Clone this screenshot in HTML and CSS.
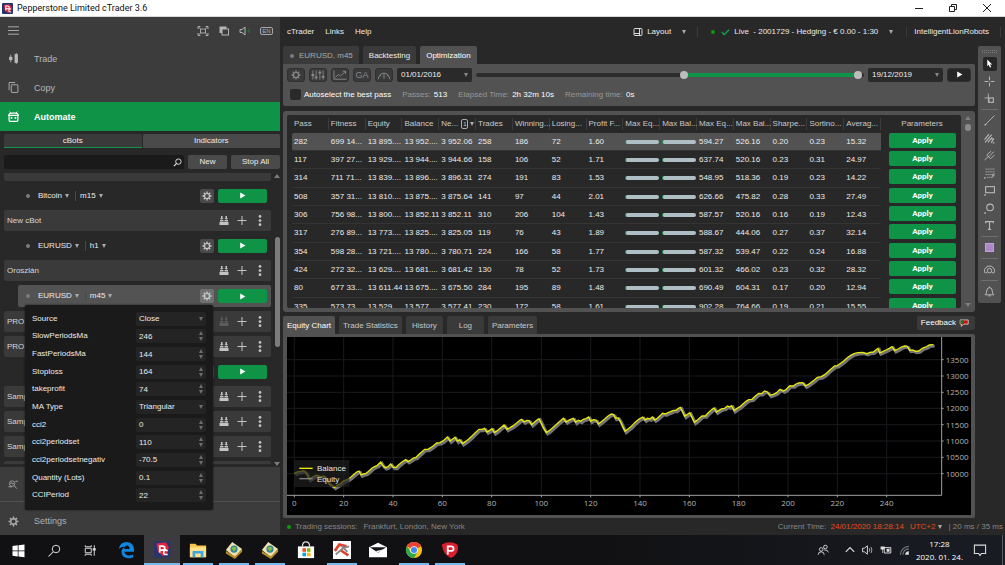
FILE: index.html
```html
<!DOCTYPE html>
<html lang="en">
<head>
    <meta charset="UTF-8">
    <meta name="viewport" content="width=device-width, initial-scale=1.0">
    <title>Pepperstone Limited cTrader 3.6</title>
    <link rel="stylesheet" href="styles.css">
</head>
<body>
    <!-- icon sprite -->
    <svg class="sprite" xmlns="http://www.w3.org/2000/svg">
        <symbol id="i-gear" viewBox="0 0 20 20">
            <circle cx="10" cy="10" r="5" fill="none" stroke="currentColor" stroke-width="2.4"/>
            <path d="M10 1v3M10 16v3M1 10h3M16 10h3M3.6 3.6l2.2 2.2M14.2 14.2l2.2 2.2M3.6 16.4l2.2-2.2M14.2 5.8l2.2-2.2" stroke="currentColor" stroke-width="2.6"/>
        </symbol>
        <symbol id="i-play" viewBox="0 0 12 12"><path d="M2 1l9 5-9 5z" fill="currentColor"/></symbol>
        <symbol id="i-build" viewBox="0 0 20 20">
            <path d="M1 13h18v6H1zM2 9h7v3H2zM11 9h7v3h-7zM4 1h3v4h2l-3.500 3.500L2 5h2zM13 1h3v4h2l-3.500 3.500L11 5h2z" fill="currentColor"/>
        </symbol>
        <symbol id="i-plus" viewBox="0 0 20 20"><path d="M10 1v18M1 10h18" stroke="currentColor" stroke-width="2"/></symbol>
        <symbol id="i-dots" viewBox="0 0 20 24">
            <circle cx="10" cy="3" r="3" fill="currentColor"/><circle cx="10" cy="12" r="3" fill="currentColor"/><circle cx="10" cy="21" r="3" fill="currentColor"/>
        </symbol>
        <symbol id="i-loupe" viewBox="0 0 20 20">
            <circle cx="12" cy="8" r="6" fill="none" stroke="currentColor" stroke-width="2"/>
            <path d="M8 12l-6 6" stroke="currentColor" stroke-width="2.4"/>
        </symbol>
    </svg>

    <div class="app">
        <header class="titlebar">
            <svg class="title-logo" viewBox="0 0 32 32"><rect width="32" height="32" rx="3" fill="#22356f"/><path d="M6 5l17-1 5 8-3 13-8 4-9-9z" fill="#e5243b"/><path d="M11 22V9h6q4 0 4 4t-4 4h-5M27 18q-6-3-7 3t7 5" fill="none" stroke="#fff" stroke-width="3"/></svg>
            <span class="title-text">Pepperstone Limited cTrader 3.6</span>
            <div class="window-buttons">
                <button aria-label="Minimize"><svg viewBox="0 0 10 10"><path d="M1 5.500h8" stroke="#222"/></svg></button>
                <button aria-label="Restore"><svg viewBox="0 0 10 10"><path d="M1.500 3.500h5v5h-5zM3.500 3.500v-2h5v5h-2" fill="none" stroke="#222"/></svg></button>
                <button aria-label="Close"><svg viewBox="0 0 10 10"><path d="M1 1l8 8M9 1l-8 8" stroke="#222"/></svg></button>
            </div>
        </header>

        <div class="body">
            <aside class="sidebar">
                <div class="side-top">
                    <button aria-label="Menu"><svg class="icon-menu" viewBox="0 0 12 12"><path d="M0 2h12M0 6h12M0 10h12" stroke="currentColor"/></svg></button>
                    <div class="side-tools">
                        <button aria-label="Full screen"><svg viewBox="0 0 24 20"><path d="M2 6V1h5M17 1h5v5M2 14v5h5M17 19h5v-5M3 2l4 4M21 2l-4 4M3 18l4-4M21 18l-4-4M7 6h10v8H7z" fill="none" stroke="currentColor" stroke-width="1.800"/></svg></button>
                        <button aria-label="Detach"><svg viewBox="0 0 24 20"><path d="M3 1h14v5H8v8H3z" fill="currentColor"/><rect x="8" y="6" width="13" height="12" fill="none" stroke="currentColor" stroke-width="2"/></svg></button>
                        <button aria-label="Sound"><svg viewBox="0 0 24 20"><path d="M2 7h4l6-5v16l-6-5H2z" fill="none" stroke="currentColor" stroke-width="2"/><path d="M15 10l7-5v10z" fill="#1d6b34"/></svg></button>
                        <button class="lang" aria-label="Language">EN</button>
                    </div>
                </div>
                <nav class="side-nav">
                    <a href="#trade"><svg viewBox="0 0 20 20"><path d="M5 3v14" stroke="currentColor" stroke-width="1.500"/><rect x="2" y="7" width="6" height="6" fill="currentColor"/><path d="M15 0v20" stroke="currentColor" stroke-width="1.500"/><rect x="12" y="2" width="6" height="16" fill="currentColor"/></svg>Trade</a>
                    <a href="#copy"><svg viewBox="0 0 20 20"><path d="M2 15V1h11" fill="none" stroke="currentColor" stroke-width="1.600"/><rect x="6" y="5" width="12" height="14" rx="1" fill="none" stroke="currentColor" stroke-width="1.600"/></svg>Copy</a>
                    <a href="#automate" class="active"><svg viewBox="0 0 20 20"><path d="M3 1l3 4M17 1l-3 4" stroke="currentColor" stroke-width="1.600"/><path d="M1 8q1-4 5-4h8q4 0 5 4zM2 9v8q0 2 2 2h12q2 0 2-2V9" fill="none" stroke="currentColor" stroke-width="2.200"/><path d="M5 11h3v3H5zM12 11h3v3h-3z" fill="currentColor"/></svg>Automate</a>
                </nav>

                <section class="bots">
                    <div class="bot-tabs">
                        <button class="active">cBots</button>
                        <button>Indicators</button>
                    </div>
                    <div class="bot-search">
                        <label class="search-box"><input type="text" aria-label="Search cBots"><svg><use href="#i-loupe"/></svg></label>
                        <button class="btn-new">New</button>
                        <button class="btn-stop">Stop All</button>
                    </div>
                    <div class="bot-scroll">
                        <div class="bot-list" id="bot-list"></div>
                        <div class="side-scrollbar"><span class="tri up"></span><span class="thumb"></span><span class="tri down"></span></div>
                    </div>
                </section>

                <div class="side-foot">
                    <button class="foot-find" aria-label="Find"><svg viewBox="0 0 24 20"><circle cx="9" cy="8" r="6" fill="none" stroke="currentColor" stroke-width="1.600"/><path d="M13 12l6 7M5 8l3-2 2 3 3-2M1 15h8M16 3h6" fill="none" stroke="currentColor" stroke-width="1.800"/></svg></button>
                    <a class="foot-settings" href="#settings"><svg><use href="#i-gear"/></svg>Settings</a>
                </div>
            </aside>

            <main class="workspace">
                <div class="menubar">
                    <nav class="menu">
                        <a href="#ctrader">cTrader</a>
                        <a href="#links">Links</a>
                        <a href="#help">Help</a>
                    </nav>
                    <div class="account">
                        <button class="layout-btn"><svg viewBox="0 0 20 20"><rect x="2" y="3" width="16" height="14" rx="2" fill="none" stroke="currentColor" stroke-width="1.800"/><path d="M2 13h11M13 3v14" stroke="currentColor" stroke-width="1.800"/></svg>Layout<span class="caret"></span></button>
                        <button class="account-btn"><span class="dot-live"></span><svg viewBox="0 0 20 20"><path d="M2 10l5 6L18 5" fill="none" stroke="#12a04e" stroke-width="3"/></svg>Live&nbsp; - 2001729 - Hedging - € 0.00 - 1:30<span class="caret"></span></button>
                        <button class="user-btn">IntelligentLionRobots</button>
                    </div>
                </div>

                <div class="work-row">
                    <div class="work-main">
                        <div class="tabs">
                            <button class="dim"><span class="dot"></span>EURUSD, m45</button>
                            <button>Backtesting</button>
                            <button class="active">Optimization</button>
                        </div>

                        <div class="opt-panel">
                            <div class="opt-tools">
                                <button class="tool" aria-label="Settings"><svg><use href="#i-gear"/></svg></button>
                                <button class="tool" aria-label="Parameters"><svg viewBox="0 0 30 20"><path d="M4 0v20M11 0v20M19 0v20M26 0v20" stroke="currentColor" stroke-width="1.800"/><path d="M1 8h6v4H1zM8 13h6v4H8zM16 3h6v4h-6zM23 12h6v4h-6z" fill="currentColor"/></svg></button>
                                <button class="tool" aria-label="Criteria"><svg viewBox="0 0 30 20"><path d="M2 0v19h27M5 15l7-6 4 3L27 2M21 2h6v6" fill="none" stroke="currentColor" stroke-width="2"/></svg></button>
                                <button class="tool ga">GA</button>
                                <button class="tool" aria-label="Resources"><svg viewBox="0 0 30 20"><path d="M3 19a12 13 0 0124 0M15 18V8M6 10l3 3M24 10l-3 3M15 6v3" fill="none" stroke="currentColor" stroke-width="2"/></svg></button>
                                <span class="date"><select aria-label="From"><option>01/01/2016</option></select></span>
                                <div class="range">
                                    <div class="range-fill" style="left: 54%; right: 2%"></div>
                                    <input type="range" min="0" max="1000" value="537" aria-label="Start date">
                                    <input type="range" min="0" max="1000" value="994" aria-label="End date">
                                </div>
                                <span class="date"><select aria-label="To"><option>19/12/2019</option></select></span>
                                <button class="start" aria-label="Start"><svg><use href="#i-play"/></svg></button>
                            </div>
                            <div class="opt-info">
                                <label class="auto"><input type="checkbox">Autoselect the best pass</label>
                                <span>Passes: <b>513</b></span>
                                <span>Elapsed Time: <b>2h 32m 10s</b></span>
                                <span>Remaining time: <b>0s</b></span>
                            </div>
                        </div>

                        <div class="pass-panel">
                            <div class="pass-view">
                                <table class="passes">
                                    <thead>
                                        <tr>
                                            <th>Pass</th><th>Fitness</th><th>Equity</th><th>Balance</th>
                                            <th>Ne... <span class="sort">1</span><span class="caret"></span></th>
                                            <th>Trades</th><th>Winning...</th><th>Losing...</th><th>Profit F...</th>
                                            <th>Max Eq...</th><th>Max Bal...</th><th>Max Eq...</th><th>Max Bal...</th>
                                            <th>Sharpe...</th><th>Sortino...</th><th>Averag...</th>
                                            <th class="col-apply">Parameters</th>
                                        </tr>
                                    </thead>
                                    <tbody id="pass-rows"></tbody>
                                </table>
                            </div>
                            <div class="pass-scrollbar"><span class="tri up"></span><span class="knob"></span><span class="tri down"></span></div>
                        </div>

                        <div class="tabs result-tabs">
                            <button class="active">Equity Chart</button>
                            <button>Trade Statistics</button>
                            <button class="wide">History</button>
                            <button class="wide">Log</button>
                            <button>Parameters</button>
                            <button class="feedback">Feedback<svg viewBox="0 0 26 20"><path d="M3 2h21v11H12l-6 6 1-6H3z" fill="#c41414" stroke="#ddd" stroke-width="2"/><path d="M4 3h9v9H4z" fill="#17762e"/></svg></button>
                        </div>
                        <div class="chart-panel">
                            <svg id="chart" viewBox="0 0 2052 534" role="img" aria-label="Equity chart"></svg>
                        </div>
                    </div>

                    <div class="draw-bar">
                        <span class="grip"></span>
                        <button class="on" aria-label="Pointer"><svg viewBox="0 0 20 20"><path d="M5 1l11 11h-5l3 6-3 1-3-6-3 3z" fill="#fff"/></svg></button>
                        <button aria-label="Crosshair"><svg viewBox="0 0 20 20"><path d="M10 1v7M10 12v7M1 10h7M12 10h7" stroke="currentColor" stroke-width="1.800"/></svg></button>
                        <button aria-label="Market snap"><svg viewBox="0 0 20 20"><path d="M8 1v17M1 9h8" stroke="currentColor" stroke-width="1.600"/><rect x="9" y="9" width="8" height="8" fill="none" stroke="currentColor" stroke-width="2"/></svg></button>
                        <hr>
                        <button aria-label="Line"><svg viewBox="0 0 20 20"><path d="M2 18L19 1" stroke="currentColor" stroke-width="1.600"/><circle cx="2.500" cy="17.500" r="1.800" fill="currentColor"/></svg></button>
                        <button aria-label="Fibonacci"><svg viewBox="0 0 20 20"><path d="M1 12L9 2M2 17L14 3M7 17l8-9M13 11h4M13 18l5-8M16 18h3" stroke="currentColor" stroke-width="2"/></svg></button>
                        <button aria-label="Pitchfork"><svg viewBox="0 0 20 20"><path d="M1 18l8-7M5 9l7 7M5 9l8-7M9 12l9-9M12 16l7-7" fill="none" stroke="currentColor" stroke-width="1.700"/></svg></button>
                        <button aria-label="Fibonacci grid"><svg viewBox="0 0 20 20"><path d="M3 2h17M3 7h17M3 12h12M6 17h9" stroke="currentColor" stroke-width="1.800" stroke-dasharray="2 1.500"/><path d="M16 17v-6h4M16 14h3" stroke="currentColor" stroke-width="1.600" fill="none"/><circle cx="1.500" cy="18" r="1.500" fill="currentColor"/></svg></button>
                        <button aria-label="Rectangle"><svg viewBox="0 0 20 20"><rect x="3" y="3" width="16" height="11" fill="none" stroke="currentColor" stroke-width="2"/><circle cx="2" cy="18" r="1.600" fill="currentColor"/></svg></button>
                        <button aria-label="Ellipse"><svg viewBox="0 0 20 20"><circle cx="11" cy="8" r="6" fill="none" stroke="currentColor" stroke-width="2"/><circle cx="2" cy="18" r="1.600" fill="currentColor"/></svg></button>
                        <button aria-label="Text"><svg viewBox="0 0 20 20"><path d="M3 6V3h14v3M10 3v14M7 17h6" fill="none" stroke="currentColor" stroke-width="2"/></svg></button>
                        <hr>
                        <button aria-label="Colour"><span class="swatch"></span></button>
                        <hr>
                        <button aria-label="Snapshot"><svg viewBox="0 0 20 20"><path d="M6 16H2q-1 0-1-2v-4q0-2 3-3l2-3h8l2 3q3 1 3 3v4q0 2-1 2h-4" fill="none" stroke="currentColor" stroke-width="1.800"/><circle cx="10" cy="12" r="4" fill="none" stroke="currentColor" stroke-width="1.800"/></svg></button>
                        <hr>
                        <button aria-label="Alerts"><svg viewBox="0 0 20 20"><path d="M2 16q3-2 3-7 0-6 5-6t5 6q0 5 3 7zM8 18h4M10 1v2" fill="none" stroke="currentColor" stroke-width="1.800"/></svg></button>
                    </div>
                </div>

                <footer class="status">
                    <span class="dot-live"></span>
                    <span>Trading sessions:</span>
                    <span class="sessions">Frankfurt, London, New York</span>
                    <span class="clock">Current Time: <em>24/01/2020 18:28:14</em></span>
                    <button class="utc">UTC+2<span class="caret"></span></button>
                    <span>| 20 ms / 35 ms</span>
                </footer>
            </main>
        </div>

        <div class="taskbar">
            <button aria-label="Start"><svg viewBox="0 0 20 20"><path d="M2 4l7-1v7H2zM10 3l8-1v8h-8zM2 11h7v7l-7-1zM10 11h8v8l-8-1z" fill="#fff"/></svg></button>
            <button aria-label="Search"><svg viewBox="0 0 20 20"><circle cx="12" cy="8" r="5" fill="none" stroke="#ddd" stroke-width="1.300"/><path d="M8 12l-6 6" stroke="#ddd" stroke-width="1.400"/></svg></button>
            <button aria-label="Task view"><svg viewBox="0 0 20 20"><path d="M3 7h8v6H3zM3 3v2h8V3M3 17v-2h8v2M15 3v14" fill="none" stroke="#ddd" stroke-width="1.300"/><path d="M13 7h4v3h-4z" fill="#ddd"/></svg></button>
            <button aria-label="Edge"><svg viewBox="0 0 20 20"><path d="M2 9q1-8 9-8 8 1 8 9v2H8q1 4 5 4 3 0 5-1v3q-3 1.500-7 1-6-1-6-7 0-4 5-6-6 0-8 3zM8 9h6q0-4-3-4t-3 4z" fill="#0f86e0" fill-rule="evenodd"/></svg></button>
            <button class="current" aria-label="cTrader"><svg viewBox="0 0 32 32"><rect x="2" y="2" width="29" height="29" rx="3" fill="#27356f"/><path d="M6 6l17-2 5 9-3 12-7 4-9-8z" fill="#e5243b"/><path d="M12 22V11h5q4 0 4 3.500T17 18h-4M26 19q-6-3-7 2.500t7 4" fill="none" stroke="#fff" stroke-width="3"/></svg></button>
            <button class="open" aria-label="Explorer"><svg viewBox="0 0 20 20"><path d="M1 3h6l2 2h10v13H1z" fill="#f5c84c"/><path d="M1 7h18v11H1z" fill="#fde08a"/><path d="M4 18v-7h12v7h-3v-4H7v4z" fill="#3ca7e6"/></svg></button>
            <button class="open" aria-label="MetaTrader 4"><svg viewBox="0 0 20 20"><path d="M1 10L8 1l11 8-8 9z" fill="#efe2b0"/><path d="M1 11v3l10 6 8-8V9l-8 8z" fill="#b58c2c"/><circle cx="10" cy="9" r="4" fill="#2d7f9b"/><path d="M7 8q3-3 6 0l-3 4z" fill="#7dbb42"/></svg></button>
            <button class="open" aria-label="MetaTrader 4"><svg viewBox="0 0 20 20"><path d="M1 10L8 1l11 8-8 9z" fill="#efe2b0"/><path d="M1 11v3l10 6 8-8V9l-8 8z" fill="#b58c2c"/><circle cx="10" cy="9" r="4" fill="#2d7f9b"/><path d="M7 8q3-3 6 0l-3 4z" fill="#7dbb42"/></svg></button>
            <button aria-label="Store"><svg viewBox="0 0 20 20"><path d="M1 6h18v13H1z" fill="#fff"/><path d="M6 6q0-5 4-5t4 5" fill="none" stroke="#ddd" stroke-width="1.400"/><path d="M6 8h4v4H6z" fill="#f25022"/><path d="M11 8h4v4h-4z" fill="#7fba00"/><path d="M6 13h4v4H6z" fill="#00a4ef"/><path d="M11 13h4v4h-4z" fill="#ffb900"/></svg></button>
            <button class="open" aria-label="Trading terminal"><svg viewBox="0 0 20 20"><path d="M0 0h20v20H0z" fill="#fff"/><path d="M2 11l5-7 8 2M8 10l9 6" fill="none" stroke="#e2402c" stroke-width="3"/><path d="M3 15l8-7 7-2M9 5l7 7" fill="none" stroke="#888" stroke-width="2"/></svg></button>
            <button aria-label="Mail"><svg viewBox="0 0 20 20"><path d="M0 7l10-5 10 5v11H0z" fill="#fff"/><path d="M1 7h18l-9 6z" fill="#151518"/><path d="M8 11l10-2-9 4z" fill="#fff"/></svg></button>
            <button class="open" aria-label="Chrome"><svg viewBox="0 0 20 20"><circle cx="10" cy="10" r="9" fill="#fbc116"/><path d="M2.200 5.500A9 9 0 0010 19l4-7H6z" fill="#2fa650"/><path d="M10 10L2.200 5.500A9 9 0 0117.800 5.500z" fill="#e94335"/><path d="M2.200 5.500h15.600L10 10z" fill="#e94335"/><circle cx="10" cy="10" r="4.200" fill="#fff"/><circle cx="10" cy="10" r="3.400" fill="#4688f1"/></svg></button>
            <button class="open" aria-label="Pepperstone"><svg viewBox="0 0 20 20"><path d="M1 4q9-5 17 0 2 3 0 8-2 5-7 7-7-3-9-10z" fill="#dc1f2e"/><path d="M7.500 15V6h3.500q3 0 3 2.500T11 11H8" fill="none" stroke="#fff" stroke-width="2"/></svg></button>

            <div class="tray">
                <svg class="people" viewBox="0 0 20 20"><circle cx="14" cy="5" r="3" fill="none" stroke="#ddd" stroke-width="1.500"/><circle cx="7" cy="9" r="3" fill="none" stroke="#ddd" stroke-width="1.500"/><path d="M2 18q0-5 5-5t5 5M12 10q6-1 7 4" fill="none" stroke="#ddd" stroke-width="1.500"/></svg>
                <svg viewBox="0 0 20 20"><path d="M3 13l7-7 7 7" fill="none" stroke="#ddd" stroke-width="2"/></svg>
                <svg viewBox="0 0 20 20"><path d="M1 7h3l5-4v14l-5-4H1z" fill="none" stroke="#ddd" stroke-width="1.600"/><path d="M12 7q2 3 0 6M15 5q3 5 0 10" fill="none" stroke="#bbb" stroke-width="1.400"/></svg>
                <svg viewBox="0 0 20 20"><path d="M7 6h11v9H7z" fill="none" stroke="#ddd" stroke-width="1.600"/><path d="M11 8h5v5h-5zM1 4h7v5H1zM4 9h1v6H4z" fill="#ddd"/></svg>
                <svg viewBox="0 0 20 20"><path d="M4 18A14 14 0 0118 4M8 18A10 10 0 0118 8" fill="none" stroke="#777" stroke-width="2"/><path d="M12 18a6 6 0 016-6v6z" fill="#ddd"/></svg>
                <div class="tray-time"><span>17:28</span><span>2020. 01. 24.</span></div>
                <svg class="notes" viewBox="0 0 20 20"><path d="M2 3h16v12h-6l-2 3-2-3H2z" fill="none" stroke="#ddd" stroke-width="1.500"/></svg>
            </div>
        </div>
    </div>

    <script src="script.js"></script>
</body>
</html>
```
FILE: styles.css
```css
* { margin: 0; padding: 0; box-sizing: border-box; }

body {
    font-family: "Liberation Sans", Arial, sans-serif;
    font-size: 8px;
    line-height: 10px;
    color: #ececec;
    background: #282828;
}

button, input, select {
    font: inherit;
    color: inherit;
    background: none;
    border: none;
    appearance: none;
}

button { cursor: pointer; white-space: nowrap; }
a { color: inherit; text-decoration: none; }
svg { display: block; }

.sprite { position: absolute; width: 0; height: 0; }

.app {
    display: flex;
    flex-direction: column;
    height: 100vh;
    min-height: 565px;
}

.body { flex: 1; display: flex; min-height: 0; }

.caret, .tri {
    display: inline-block;
    border: 2px solid transparent;
    border-top: 4px solid #aaa;
    border-bottom: 0;
}

.tri { border-width: 4px 3px 0; border-top-color: #7c7c7c; }
.tri.up { transform: rotate(180deg); }

.dot { width: 4px; height: 4px; border-radius: 50%; background: #7c7c7c; }
.dot-live { width: 4px; height: 4px; border-radius: 50%; background: #0c9a0c; }

/* title bar */
.titlebar {
    display: flex;
    align-items: center;
    height: 17px;
    padding: 0 13px 0 2px;
    background: #fff;
    color: #111;
    border-bottom: 1px solid #d8d8d8;
}

.title-logo { width: 11px; height: 11px; margin-right: 4px; }
.title-text { font-family: Roboto, "Open Sans", sans-serif; font-size: 9px; line-height: 14px; flex: 1; }
.window-buttons { display: flex; gap: 24px; }
.window-buttons button { display: block; }
.window-buttons svg { width: 10px; height: 10px; }

/* sidebar */
.sidebar {
    width: 280px;
    flex: none;
    display: flex;
    flex-direction: column;
    background: #3c3c3c;
}

.side-top {
    display: flex;
    justify-content: space-between;
    align-items: center;
    height: 27px;
    padding: 0 7px 0 8px;
    color: #b4b4b4;
}

.side-tools { display: flex; align-items: center; gap: 9px; }
.icon-menu { width: 11px; height: 11px; }
.side-tools svg { width: 12px; height: 10px; }

.side-tools .lang {
    border: 1px solid #a8a8a8;
    border-radius: 2px;
    width: 13px;
    height: 8px;
    font-size: 6px;
    line-height: 6px;
}

.side-nav a {
    display: flex;
    align-items: center;
    gap: 15px;
    height: 29px;
    padding-left: 8px;
    font-size: 9px;
    color: #b8b8b8;
}

.side-nav svg, .side-foot svg { width: 11px; height: 11px; }
.side-nav a.active { background: #0e9347; color: #fff; font-weight: bold; }

.bots {
    flex: 1;
    min-height: 0;
    display: flex;
    flex-direction: column;
    padding: 3px 0 0 4px;
    background: #282828;
}

.bot-tabs { display: flex; gap: 1px; margin-bottom: 7px; }
.bot-tabs button { flex: 1; height: 14px; background: #4a4a4a; border-radius: 2px 2px 0 0; }
.bot-tabs .active { background: #3a3a3a; border-bottom: 1px solid #0e9347; }

.bot-search { display: flex; gap: 4px; margin-bottom: 4px; }
.search-box { flex: 1; display: flex; align-items: center; height: 14px; padding: 0 2px; background: #1a1a1a; border-radius: 2px; }
.search-box input { flex: 1; min-width: 0; outline: none; }
.search-box svg { width: 9px; height: 9px; }
.bot-search button { height: 14px; background: #4a4a4a; border-radius: 2px; }
.btn-new { width: 39px; }
.btn-stop { width: 49px; }

.bot-scroll { flex: 1; min-height: 0; display: flex; }
.bot-list { flex: 1; display: flex; flex-direction: column; gap: 4px; }

.bot-card {
    flex: none;
    display: flex;
    align-items: center;
    gap: 8px;
    height: 21px;
    padding: 0 6px 0 3px;
    background: #3a3a3a;
    border-radius: 2px;
    color: #c4c4c4;
}

.bot-card .bot-name { flex: 1; color: #d8d8d8; }
.bot-card svg { width: 10px; height: 11px; }
.bot-card .off { color: #5c5c5c; }
.bot-card.cut-top { height: 8px; border-radius: 0 0 2px 2px; }
.bot-card.cut-bottom { height: 3px; border-radius: 2px 2px 0 0; }

.bot-run {
    flex: none;
    position: relative;
    display: flex;
    align-items: center;
    gap: 4px;
    height: 21px;
    margin-left: 14px;
    padding: 0 4px 0 8px;
    border-radius: 2px;
}

.bot-run.selected { height: 22px; background: #535353; }
.bot-run .dot { margin-right: 4px; }
.bot-run .pick { display: flex; align-items: center; gap: 3px; padding-right: 2px; }
.bot-run .pick + .pick { padding-left: 4px; border-left: 1px solid #484848; }
.bot-run .cog { margin-left: auto; width: 14px; height: 14px; padding: 2px; background: #4a4a4a; border-radius: 2px; color: #ccc; }
.bot-run.selected .cog { background: #707070; }
.bot-run .cog svg { width: 10px; height: 10px; }

.bot-run .go {
    display: flex;
    justify-content: center;
    align-items: center;
    width: 49px;
    height: 14px;
    background: #0e9347;
    border-radius: 2px;
    color: #fff;
}

.go svg { width: 7px; height: 7px; }

.side-scrollbar {
    width: 9px;
    display: flex;
    flex-direction: column;
    align-items: center;
    padding: 1px 0 1px 3px;
}

.side-scrollbar .thumb { width: 5px; height: 110px; margin: 59px 0 auto; border-radius: 3px; background: #7c7c7c; }

/* instance parameters */
.params {
    position: absolute;
    z-index: 5;
    left: 7px;
    top: 20px;
    width: 188px;
    height: 205px;
    display: grid;
    grid-auto-rows: 1fr;
    padding: 5px 7px 6px;
    background: #1a1a1a;
    border-radius: 2px;
    box-shadow: 0 0 2px #111;
}

.params label { display: flex; justify-content: space-between; align-items: center; }

.field {
    position: relative;
    width: 70px;
    height: 14px;
    background: #242424;
    border-radius: 2px;
}

.field input, .field select { display: block; width: 100%; height: 14px; padding: 0 3px; outline: none; appearance: textfield; }
.field select { appearance: none; }
.field input::-webkit-inner-spin-button { display: none; }

.field::before, .field::after {
    content: "";
    position: absolute;
    right: 3px;
    border: 2px solid transparent;
}

.field::before { top: 2px; border-top: 0; border-bottom: 4px solid #6e6e6e; }
.field::after { bottom: 2px; border-bottom: 0; border-top: 4px solid #6e6e6e; }
.field.choice::before { display: none; }
.field.choice::after { bottom: 5px; }

.side-foot { color: #b0b0b0; }
.foot-find { display: flex; align-items: center; width: 100%; height: 35px; padding-left: 8px; border-bottom: 1px solid #505050; }
.foot-settings { display: flex; align-items: center; gap: 15px; height: 33px; padding: 5px 0 0 8px; font-size: 9px; }

/* workspace */
.workspace { flex: 1; min-width: 0; display: flex; flex-direction: column; }

.menubar { display: flex; justify-content: space-between; align-items: center; height: 29px; padding: 0 4px 0 7px; }
.menu { display: flex; gap: 11px; }
.account { display: flex; align-items: center; }
.account button { display: flex; align-items: center; border-right: 1px solid #3c3c3c; }
.account svg { width: 10px; height: 10px; margin-right: 4px; }
.layout-btn { padding-right: 11px; }
.account .caret { margin-left: 11px; }
.account-btn { padding: 0 13px; }
.account-btn .dot-live { margin-right: 6px; }
.account-btn svg { width: 9px; }
.account .user-btn { padding: 0 11px 0 7px; }

.work-row { display: flex; align-items: flex-start; gap: 3px; padding: 0 4px 0 3px; }
.work-main { flex: 1; min-width: 0; }

.tabs { display: flex; gap: 4px; }

.tabs button {
    display: flex;
    align-items: center;
    justify-content: center;
    height: 18px;
    padding: 2px 6px 0;
    background: #3a3a3a;
    border-radius: 2px 2px 0 0;
}

.tabs button.active { background: #525252; color: #fff; }
.tabs .dim { color: #aaa; }
.tabs .dot { margin: 0 5px 0 1px; }

.opt-panel { padding: 3px 4px 4px; background: #525252; border-radius: 0 2px 2px 2px; margin-bottom: 5px; }
.opt-tools { display: flex; align-items: center; gap: 4px; height: 15px; }

.tool, .start {
    display: flex;
    align-items: center;
    justify-content: center;
    width: 18px;
    height: 14px;
    background: #3a3a3a;
    border: 1px solid #303030;
    border-radius: 3px;
    color: #8a8a8a;
}

.tool svg { width: 14px; height: 10px; }
.tool.ga { font-size: 9px; }
.start { width: 24px; background: #262626; color: #fff; }
.start svg { width: 7px; height: 7px; }

.date { position: relative; width: 75px; height: 14px; background: #2a2a2a; border-radius: 2px; }
.date select { display: block; width: 100%; height: 14px; padding: 0 4px; }
.date::after { content: ""; position: absolute; right: 4px; top: 5px; border: 2px solid transparent; border-top: 4px solid #888; border-bottom: 0; }

.range { flex: 1; position: relative; height: 4px; border-radius: 2px; background: #2c2c2c; }
.range-fill { position: absolute; top: 0; bottom: 0; background: #0e9347; }
.range input { position: absolute; top: -2px; left: 0; width: 100%; height: 8px; pointer-events: none; }
.range input::-webkit-slider-thumb { appearance: none; width: 8px; height: 8px; border-radius: 50%; background: #bdbdbd; pointer-events: auto; }

.opt-info { display: flex; align-items: center; gap: 11px; height: 20px; padding: 5px 0 0 3px; color: #989898; }
.opt-info b { margin-left: 1px; color: #fff; font-weight: normal; }
.auto { display: flex; align-items: center; gap: 3px; color: #fff; }
.auto input { width: 11px; height: 11px; background: #2a2a2a; border-radius: 2px; }

/* optimization passes */
.pass-panel { display: flex; padding: 4px 0 4px 4px; background: #525252; border-radius: 3px; margin-bottom: 4px; }
.pass-view { flex: 1; min-width: 0; height: 193px; overflow: hidden; padding: 0 0 0 5px; background: #282828; border-radius: 2px; }

.passes { width: 100%; table-layout: fixed; border-collapse: separate; border-spacing: 0; }
.passes th, .passes td { overflow: hidden; white-space: nowrap; text-align: left; font-weight: normal; padding: 0 0 0 2px; }
.passes th { height: 18px; color: #c8c8c8; background: linear-gradient(#3c3c3c, #3c3c3c) no-repeat right center / 1px 12px; }
.passes th.col-apply { width: 80px; text-align: center; background: none; }
.passes td { height: 18px; border-bottom: 1px solid #343434; }
.passes tr:nth-child(3n) td { height: 19px; }
.passes .picked td { background: #525252; }
.passes .picked td:first-child { border-radius: 2px 0 0 2px; }
.passes .picked td.col-apply, .passes td.col-apply { padding: 0 5px 0 8px; border: none; background: none; vertical-align: top; }

.passes .sort { display: inline-block; width: 7px; height: 10px; margin-left: 1px; border: 1px solid #aaa; border-radius: 2px; text-align: center; font-size: 6px; line-height: 8px; }
.passes .sort + .caret { margin-left: 2px; }

.bar { display: block; height: 4px; border-radius: 2px; border-left: 1px solid #0e9347; background: #b0bec5; margin-right: 1px; }

.apply { display: block; width: 100%; height: 15px; background: #0e9347; border-radius: 2px; color: #fff; font-family: Roboto, sans-serif; font-weight: bold; }

.pass-scrollbar { width: 14px; display: flex; flex-direction: column; align-items: center; gap: 4px; padding: 1px 0; }
.pass-scrollbar .knob { width: 6px; height: 7px; border-radius: 3px; background: #8a8a8a; margin-bottom: auto; }

/* results */
.result-tabs button { padding: 2px 4px 0; color: #c8c8c8; }
.result-tabs .wide { width: 37px; }
.result-tabs .feedback { margin-left: auto; height: 14px; padding: 0 6px 0 4px; border-radius: 2px; color: #fff; gap: 3px; }
.feedback svg { width: 10px; height: 8px; }

.chart-panel { padding: 3px 4px; background: #525252; border-radius: 0 2px 2px 2px; }
.chart-panel svg { width: 100%; background: #000; font-family: "Open Sans", "Noto Sans", sans-serif; }

.chart-grid { stroke: #1a1a1e; stroke-width: 3; fill: none; }
.chart-axis { stroke: #a0a0a0; stroke-width: 3; fill: none; }
.chart-label { fill: #b4b4b4; font-size: 24px; }
.chart-label.mid { text-anchor: middle; }
.chart-equity { fill: none; stroke: #747474; stroke-width: 9; }
.chart-balance { fill: none; stroke: #e8e815; stroke-width: 4; }
.chart-legend { fill: #202020; fill-opacity: 0.7; }
.chart-legend-text { fill: #e6e6e6; font-family: "Liberation Sans", Arial, sans-serif; font-size: 24px; }

.status { display: flex; align-items: center; height: 17px; padding: 0 2px 0 7px; color: #868686; }
.status .dot-live { margin-right: 4px; }
.sessions { margin-left: 6px; }
.clock { margin-left: auto; }
.status em { font-style: normal; color: #e8481c; margin-left: 2px; }
.status .utc { display: flex; align-items: center; gap: 3px; color: #e8481c; margin: 0 6px; }

.draw-bar {
    width: 23px;
    height: 257px;
    padding: 4px 2px;
    display: flex;
    flex-direction: column;
    align-items: center;
    justify-content: space-between;
    background: #525252;
    border-radius: 2px;
    color: #b8b8b8;
}

.draw-bar button { display: flex; align-items: center; justify-content: center; width: 14px; height: 14px; border-radius: 2px; }
.draw-bar .on { background: #262626; }
.draw-bar svg { width: 11px; height: 11px; }
.draw-bar .on svg { width: 9px; height: 9px; }
.draw-bar hr { width: 17px; border: none; border-top: 1px solid #6e6e6e; }
.grip { width: 15px; height: 3px; border: dotted #7c7c7c; border-width: 1px 0; }
.swatch { width: 9px; height: 9px; background: #ad85c9; border: 1px solid #bfa3d4; }

/* taskbar */
.taskbar { display: flex; height: 30px; background: linear-gradient(90deg, #111113 60%, #191c24); }
.taskbar button { display: flex; align-items: center; justify-content: center; width: 36px; height: 30px; padding: 0 3px; }
.taskbar button svg { width: 18px; height: 18px; }
.taskbar button:nth-child(-n+3) svg { width: 15px; height: 15px; }
.taskbar .current { background: #3c3c40; border-bottom: 2px solid #76b9ed; }
.taskbar .open { background: linear-gradient(#76b9ed, #76b9ed) no-repeat center bottom / 30px 2px; }

.tray { margin-left: auto; margin-right: 2px; padding-right: 15px; border-right: 1px solid #5a5c62; display: flex; align-items: center; gap: 6px; font-family: "Open Sans", "Noto Sans", sans-serif; color: #fff; }
.tray svg { width: 12px; height: 12px; }
.tray .people { margin-right: 9px; }
.tray .notes { width: 14px; height: 14px; }
.tray-time { display: flex; flex-direction: column; align-items: center; line-height: 13px; margin: 0 4px 0 0; }
```
FILE: script.js
```js
// cBots list
const bots = [
    { cut: 'cut-top' },
    { symbol: 'Bitcoin', tf: 'm15' },
    { name: 'New cBot' },
    { symbol: 'EURUSD', tf: 'h1' },
    { name: 'Oroszlán' },
    { symbol: 'EURUSD', tf: 'm45', selected: true },
    { name: 'PRO', off: true },
    { name: 'PRO' },
    { symbol: '', tf: '' },
    { name: 'Samp' },
    { name: 'Samp' },
    { name: 'Samp' },
    { cut: 'cut-bottom' }
];

const params = [
    ['Source', 'Close', 'select'],
    ['SlowPeriodsMa', '246'],
    ['FastPeriodsMa', '144'],
    ['Stoploss', '164'],
    ['takeprofit', '74'],
    ['MA Type', 'Triangular', 'select'],
    ['cci2', '0'],
    ['cci2periodset', '110'],
    ['cci2periodsetnegativ', '-70.5'],
    ['Quantity (Lots)', '0.1'],
    ['CCIPeriod', '22']
];

const icon = name => `<svg><use href="#i-${name}"/></svg>`;

function paramsHtml() {
    return `<div class="params">${params.map(([label, value, kind]) => `
        <label>${label}
            <span class="field ${kind ? 'choice' : ''}">
                ${kind ? `<select><option>${value}</option></select>` : `<input type="number" step="any" value="${value}">`}
            </span>
        </label>`).join('')}</div>`;
}

function botHtml(bot) {
    if (bot.cut) return `<div class="bot-card ${bot.cut}"></div>`;
    if (bot.name) {
        return `
            <div class="bot-card">
                <span class="bot-name">${bot.name}</span>
                <button class="${bot.off ? 'off' : ''}" aria-label="Build">${icon('build')}</button>
                <button aria-label="Add instance">${icon('plus')}</button>
                <button aria-label="More">${icon('dots')}</button>
            </div>`;
    }
    const picks = bot.symbol ? `
        <span class="dot"></span>
        <button class="pick">${bot.symbol}<span class="caret"></span></button>
        <button class="pick">${bot.tf}<span class="caret"></span></button>` : '';
    return `
        <div class="bot-run ${bot.selected ? 'selected' : ''}">
            ${picks}
            <button class="cog" aria-label="Parameters">${icon('gear')}</button>
            <button class="go" aria-label="Run">${icon('play')}</button>
            ${bot.selected ? paramsHtml() : ''}
        </div>`;
}

document.getElementById('bot-list').innerHTML = bots.map(botHtml).join('');

// optimization passes
const passes = [
    ['282', '699 14...', '13 895....', '13 952....', '3 952.06', '258', '186', '72', '1.60', '594.27', '526.16', '0.20', '0.23', '15.32'],
    ['117', '397 27...', '13 929....', '13 944....', '3 944.66', '158', '106', '52', '1.71', '637.74', '520.16', '0.23', '0.31', '24.97'],
    ['314', '711 71...', '13 839....', '13 896....', '3 896.31', '274', '191', '83', '1.53', '548.95', '518.36', '0.19', '0.23', '14.22'],
    ['508', '357 31...', '13 810....', '13 875....', '3 875.64', '141', '97', '44', '2.01', '626.66', '475.82', '0.28', '0.33', '27.49'],
    ['306', '756 98...', '13 800....', '13 852.11', '3 852.11', '310', '206', '104', '1.43', '587.57', '520.16', '0.16', '0.19', '12.43'],
    ['317', '276 89...', '13 773....', '13 825....', '3 825.05', '119', '76', '43', '1.89', '588.67', '444.06', '0.27', '0.37', '32.14'],
    ['354', '598 28...', '13 721....', '13 780....', '3 780.71', '224', '166', '58', '1.77', '587.32', '539.47', '0.22', '0.24', '16.88'],
    ['424', '272 32...', '13 629....', '13 681....', '3 681.42', '130', '78', '52', '1.73', '601.32', '466.02', '0.23', '0.32', '28.32'],
    ['80', '677 33...', '13 611.44', '13 675....', '3 675.50', '284', '195', '89', '1.48', '690.49', '604.31', '0.17', '0.20', '12.94'],
    ['335', '573 73...', '13 529....', '13 577....', '3 577.41', '230', '172', '58', '1.61', '902.28', '764.66', '0.19', '0.21', '15.55']
];

document.getElementById('pass-rows').innerHTML = passes.map((row, i) => {
    const cells = row.map(v => `<td>${v}</td>`);
    const bar = '<td><span class="bar"></span></td>';
    cells.splice(9, 0, bar, bar);
    return `<tr class="${i === 0 ? 'picked' : ''}">${cells.join('')}<td class="col-apply"><button class="apply">Apply</button></td></tr>`;
}).join('');

// equity chart
const balance = '22,410 31,405 41,403 49,401 57,407 67,427 79,419 89,415 101,419 111,417 119,429 127,441 135,445 142,451 151,445 161,439 171,431 181,428 191,421 201,412 209,405 216,402 222,414 229,411 237,409 245,403 255,393 263,389 271,385 281,375 289,388 295,392 303,389 311,381 319,391 327,391 335,383 345,375 356,368 363,374 371,369 379,363 387,361 397,351 405,344 413,337 423,337 431,332 439,326 449,318 459,317 469,311 481,300 489,312 497,306 504,301 511,313 518,308 526,320 535,314 545,306 555,297 565,287 576,277 585,277 592,274 600,285 608,280 615,275 622,287 631,281 641,272 651,264 660,277 669,272 679,266 689,258 696,252 703,247 711,255 719,250 726,251 734,263 742,256 749,250 756,245 762,257 769,272 778,287 787,281 797,272 807,263 817,254 829,244 837,255 845,250 851,247 859,244 866,256 874,250 881,253 889,247 897,245 905,240 911,253 919,248 927,249 934,261 943,254 953,246 963,237 973,231 980,233 985,244 993,242 1000,253 1007,269 1014,283 1023,276 1033,268 1043,257 1055,247 1067,240 1074,249 1081,244 1089,246 1096,240 1103,249 1111,244 1119,236 1127,229 1135,231 1143,227 1151,224 1159,220 1167,220 1173,215 1180,211 1187,225 1193,238 1200,233 1208,227 1215,241 1222,256 1229,251 1237,244 1245,237 1255,237 1263,228 1272,220 1281,213 1288,225 1296,220 1305,215 1313,214 1321,207 1327,210 1334,206 1341,221 1349,215 1359,209 1367,202 1377,193 1385,188 1395,187 1405,177 1415,169 1423,170 1433,162 1441,165 1449,175 1459,172 1469,167 1479,157 1489,162 1497,158 1507,147 1519,147 1527,141 1535,138 1547,137 1555,147 1563,143 1571,137 1581,130 1591,121 1603,119 1613,113 1623,104 1633,95 1643,87 1651,86 1661,79 1671,71 1681,62 1691,55 1701,50 1713,47 1727,46 1739,50 1749,46 1759,45 1773,34 1778,48 1787,44 1797,39 1807,34 1815,29 1823,41 1833,36 1843,30 1853,27 1861,28 1868,40 1877,39 1885,43 1895,42 1907,33 1917,30 1927,24 1939,23';

const xStep = 148.1;
const yStep = 48.9;
let svg = '';

for (let i = 0; i <= 12; i++) {
    const x = Math.round(22 + i * xStep);
    svg += `<path class="chart-grid" d="M${x} 0V475"/><path class="chart-axis" d="M${x} 475v6"/>`;
    svg += `<text class="chart-label mid" x="${x}" y="508">${i * 20}</text>`;
}
for (let i = 0; i < 8; i++) {
    const y = Math.round(410 - i * yStep);
    svg += `<path class="chart-grid" d="M0 ${y}H1964"/><path class="chart-axis" d="M1964 ${y}h6"/>`;
    svg += `<text class="chart-label" x="1976" y="${y + 9}">${10000 + i * 500}</text>`;
}
svg += '<path class="chart-axis" d="M0 475H1964V0"/>';
svg += `<polyline class="chart-equity" transform="translate(4 4)" points="${balance}"/>`;
svg += `<polyline class="chart-balance" points="${balance}"/>`;
svg += `<rect class="chart-legend" x="22" y="369" width="165" height="81"/>
    <path d="M37 394h40" stroke="#f0f000" stroke-width="4"/>
    <path d="M37 425h40" stroke="#808080" stroke-width="4"/>
    <text class="chart-legend-text" x="90" y="403">Balance</text>
    <text class="chart-legend-text" x="90" y="434">Equity</text>`;

document.getElementById('chart').innerHTML = svg;
```
